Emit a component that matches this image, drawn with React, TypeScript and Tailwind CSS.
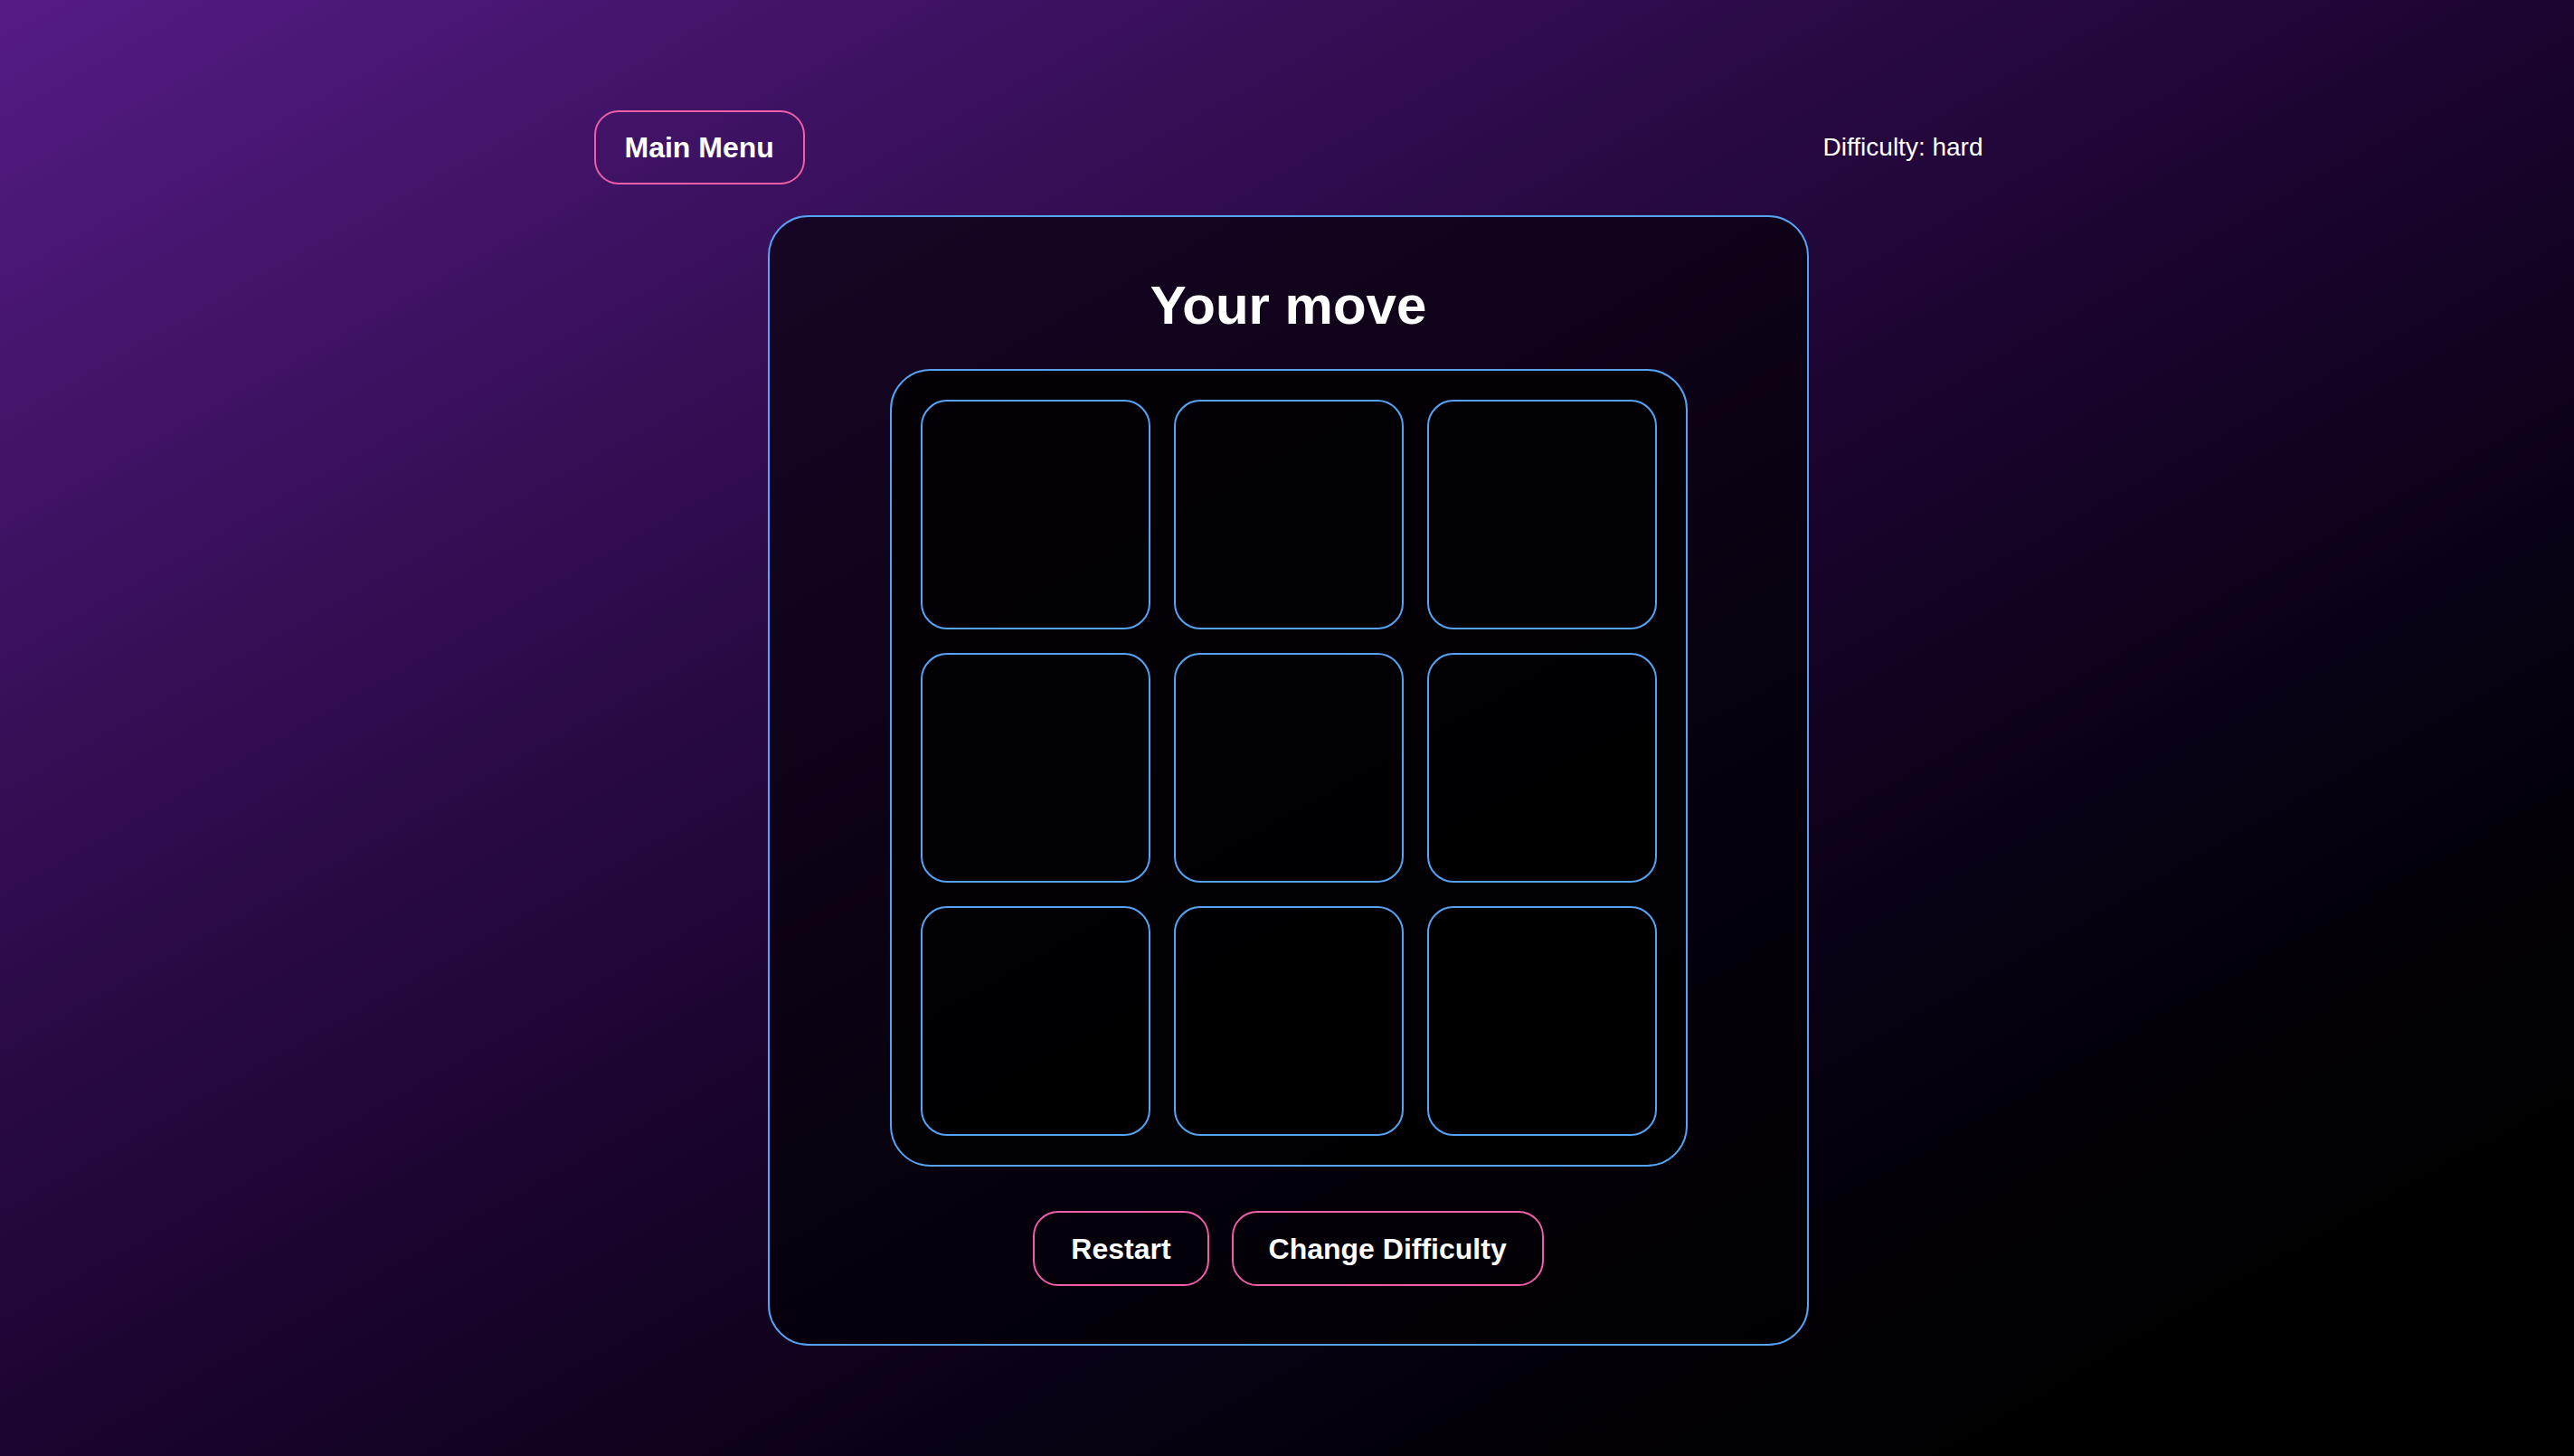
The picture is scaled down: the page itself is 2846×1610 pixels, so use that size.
import React from "react";

export default function App() {
  const cells = Array.from({ length: 9 });
  return (
    <div
      className="min-h-screen w-full bg-gradient-to-br from-[#551c85] to-black pl-[3px] text-white"
      style={{ fontFamily: '"Liberation Sans", Arial, Helvetica, sans-serif' }}
    >
      <div className="mx-auto flex w-[1536px] flex-col items-center pt-[122px] pb-[120px]">
        <div className="flex w-full items-center justify-between">
          <button className="flex h-[82px] items-center rounded-[27px] border-2 border-[#ee5fa8] bg-transparent px-[32px] text-[32px] font-bold leading-none text-white">
            Main Menu
          </button>
          <div className="text-[28px] leading-none text-white">Difficulty: hard</div>
        </div>

        <div className="mt-[34px] flex w-[1151px] flex-col items-center rounded-[45px] border-2 border-[#56a3f5] bg-black/60 pt-[68px] pb-[64px]">
          <h1 className="text-[60px] font-bold leading-none text-white">Your move</h1>

          <div className="mt-[40px] w-[882px] rounded-[45px] border-2 border-[#56a3f5] bg-black/80 p-[32px]">
            <div className="grid grid-cols-3 gap-[26px]">
              {cells.map((_, i) => (
                <button
                  key={i}
                  className="aspect-square rounded-[29px] border-2 border-[#56a3f5] bg-black/20"
                />
              ))}
            </div>
          </div>

          <div className="mt-[49px] flex items-center gap-[25px]">
            <button className="flex h-[83px] items-center rounded-[28px] border-2 border-[#ee5fa8] bg-transparent px-[40px] text-[32px] font-bold leading-none text-white">
              Restart
            </button>
            <button className="flex h-[83px] items-center rounded-[28px] border-2 border-[#ee5fa8] bg-transparent px-[39px] text-[32px] font-bold leading-none text-white">
              Change Difficulty
            </button>
          </div>
        </div>
      </div>
    </div>
  );
}
